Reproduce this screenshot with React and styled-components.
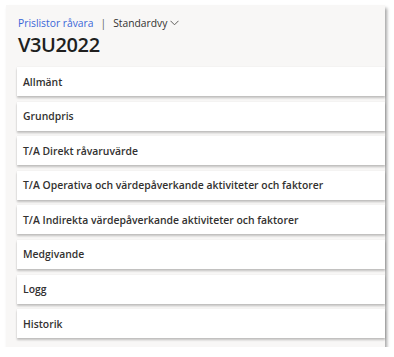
import React from "react";
import styled, { createGlobalStyle } from "styled-components";

const Global = createGlobalStyle`
  html, body { margin: 0; padding: 0; background: #ffffff; }
  body { font-family: "Open Sans", "Noto Sans", sans-serif; }
`;

const Page = styled.div`
  padding: 5px 0 0 6px;
  width: 379px;
`;

const Panel = styled.div`
  background: #f8f7f6;
  box-shadow: 2px 3px 3px rgba(0, 0, 0, 0.35);
  padding: 11px 0 9px 11px;
  display: flex;
  flex-direction: column;
`;

const Breadcrumb = styled.div`
  display: flex;
  align-items: center;
  gap: 5px;
  font-size: 10.3px;
  line-height: 14px;
  padding-left: 1px;
  color: #323130;
`;

const Crumb = styled.span`
  color: #3a66d8;
`;

const Sep = styled.span`
  color: #605e5c;
  padding: 0 2px;
`;

const ViewPicker = styled.span`
  display: flex;
  align-items: center;
  gap: 3px;
`;

const Title = styled.h1`
  margin: 2.5px 0 10.5px 1px;
  font-size: 20px;
  line-height: 24px;
  font-weight: 600;
  color: #201f1e;
  letter-spacing: -0.4px;
`;

const List = styled.div`
  display: flex;
  flex-direction: column;
  gap: 5.6px;
`;

const Card = styled.div`
  background: #ffffff;
  height: 29px;
  display: flex;
  align-items: center;
  padding-left: 6px;
  font-size: 10.4px;
  font-weight: 600;
  color: #323130;
  box-shadow: 0 1.5px 2px rgba(0, 0, 0, 0.22), 0 0 1px rgba(0, 0, 0, 0.1);
`;

const sections = [
  "Allmänt",
  "Grundpris",
  "T/A Direkt råvaruvärde",
  "T/A Operativa och värdepåverkande aktiviteter och faktorer",
  "T/A Indirekta värdepåverkande aktiviteter och faktorer",
  "Medgivande",
  "Logg",
  "Historik",
];

export default function App() {
  return (
    <>
      <Global />
      <Page>
        <Panel>
          <Breadcrumb>
            <Crumb>Prislistor råvara</Crumb>
            <Sep>|</Sep>
            <ViewPicker>
              Standardvy
              <svg width="9" height="6" viewBox="0 0 9 6" fill="none">
                <path d="M0.5 0.8 L4.5 4.8 L8.5 0.8" stroke="#605e5c" strokeWidth="1" />
              </svg>
            </ViewPicker>
          </Breadcrumb>
          <Title>V3U2022</Title>
          <List>
            {sections.map((s) => (
              <Card key={s}>{s}</Card>
            ))}
          </List>
        </Panel>
      </Page>
    </>
  );
}
